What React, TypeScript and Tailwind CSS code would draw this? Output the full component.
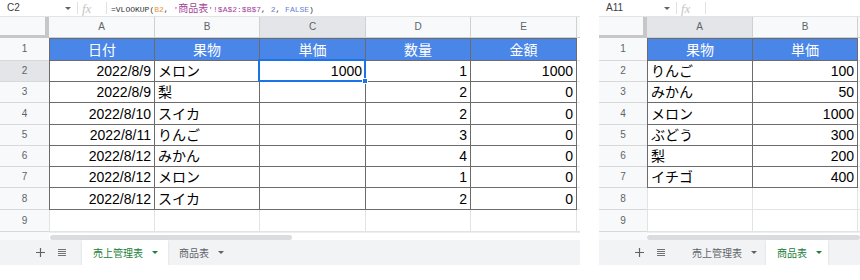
import React from "react";

const SANS = "font-['Liberation_Sans','Noto_Sans_CJK_JP',sans-serif]";

const ROW_H = [
  "h-[23px]",
  "h-[21px]",
  "h-[21px]",
  "h-[22px]",
  "h-[21px]",
  "h-[21px]",
  "h-[21px]",
  "h-[22px]",
  "h-[22px]",
];

type Col = { letter: string; w: string; align: "l" | "r"; hl?: boolean };
type Tab = { label: string; w: string; active?: boolean };

function Caret({ className }: { className?: string }) {
  return (
    <svg width="6" height="3" viewBox="0 0 6 3" className={className}>
      <path d="M0 0h6L3 3z" fill="currentColor" />
    </svg>
  );
}

function PlusIcon() {
  return (
    <svg width="9" height="9" viewBox="0 0 9 9">
      <path d="M4.5 0v9M0 4.5h9" stroke="#5f6368" strokeWidth="1.2" />
    </svg>
  );
}

function ListIcon() {
  return (
    <svg width="8" height="8" viewBox="0 0 8 8">
      <path d="M0 0.5h8M0 2.5h8M0 4.5h8M0 6.5h8" stroke="#6f7378" strokeWidth="1" />
    </svg>
  );
}

type SheetProps = {
  w: string;
  rhw: string;
  nameBox: string;
  formula?: React.ReactNode;
  cols: Col[];
  rows: string[][];
  tableRows: number;
  hlRow?: number;
  sel?: { r: number; c: number };
  thumb: string;
  tabs: Tab[];
};

function Sheet(p: SheetProps) {
  return (
    <div className={`${p.w} h-full flex flex-col shrink-0`}>
      {/* formula bar */}
      <div className="h-[17px] flex items-center border-b border-[#e2e3e3] shrink-0 bg-white">
        <div className="w-[62px] pl-[7px] text-[10px] leading-none text-[#3c4043]">{p.nameBox}</div>
        <div className="w-[15px] pl-[3px] flex items-center text-[#5f6368]">
          <Caret />
        </div>
        <div className="w-px h-[12px] bg-[#e0e0e0]" />
        <div className="w-[28px] pl-[4px] font-['Liberation_Serif',serif] italic text-[13px] leading-none text-[#c4c4c4]">
          fx
        </div>
        <div className="w-px h-[12px] bg-[#e0e0e0]" />
        <div className="pl-[4px] whitespace-pre font-['Liberation_Mono','Noto_Sans_CJK_JP',monospace] text-[8px] leading-none text-[#333]">
          {p.formula}
        </div>
      </div>

      {/* column header row */}
      <div className="h-[21px] flex shrink-0">
        <div className={`${p.rhw} bg-[#f8f9fa] border-r-4 border-b-[3px] border-[#c7c7c7]`} />
        {p.cols.map((c) => (
          <div
            key={c.letter}
            className={`${c.w} ${c.hl ? "bg-[#e3e5e8]" : "bg-[#f8f9fa]"} border-r border-b border-[#d0d0d0] flex items-center justify-center text-[10px] leading-none text-[#5f6368]`}
          >
            {c.letter}
          </div>
        ))}
        <div className="flex-1 bg-[#f8f9fa] border-b border-[#d0d0d0]" />
      </div>

      {/* rows */}
      {ROW_H.map((h, i) => {
        const inTable = i < p.tableRows;
        const isHead = i === 0;
        const bc = inTable ? "border-[#6b6b6b]" : "border-[#e2e3e3]";
        return (
          <div key={i} className={`${h} flex shrink-0`}>
            <div
              className={`${p.rhw} ${p.hlRow === i + 1 ? "bg-[#e3e5e8]" : "bg-[#f8f9fa]"} border-b border-[#d8d8d8] flex items-center justify-center text-[10px] leading-none text-[#5f6368]`}
            >
              {i + 1}
            </div>
            {p.cols.map((c, j) => {
              const v = p.rows[i]?.[j] ?? "";
              const isSel = p.sel && p.sel.r === i && p.sel.c === j;
              return (
                <div
                  key={j}
                  className={`${c.w} relative flex items-center px-[3px] text-[14px] leading-none border-r border-b ${j === 0 ? "border-l" : ""} ${isHead && inTable ? "border-t" : ""} ${bc} ${
                    isHead && inTable
                      ? "bg-[#4a86e8] text-white justify-center"
                      : c.align === "r"
                        ? "justify-end text-black"
                        : "justify-start text-black"
                  }`}
                >
                  {v}
                  {isSel && (
                    <div className="absolute left-[-2px] top-[-2px] right-[-1px] bottom-[-1px] border-2 border-[#1a73e8] z-10">
                      <div className="absolute right-[-4px] bottom-[-4px] w-[6px] h-[6px] bg-[#1a73e8] border border-white" />
                    </div>
                  )}
                </div>
              );
            })}
            <div className="flex-1 border-b border-[#e2e3e3]" />
          </div>
        );
      })}

      {/* horizontal scroll */}
      <div className="h-[8px] flex shrink-0">
        <div className={`${p.rhw} bg-[#f8f9fa]`} />
        <div className="flex-1 bg-white border-t border-[#eeeeee]">
          <div className={`${p.thumb} h-[5px] mt-[2px] rounded-full bg-[#dadce0]`} />
        </div>
      </div>

      {/* tab bar */}
      <div className="h-[25px] bg-[#f1f3f4] flex shrink-0">
        <div className="w-[82px] flex items-center pl-[36px] gap-[13px]">
          <PlusIcon />
          <ListIcon />
        </div>
        {p.tabs.map((t) => (
          <div
            key={t.label}
            className={`${t.w} h-full flex items-center pl-[11px] gap-[9px] text-[10px] leading-none font-['Noto_Sans_CJK_JP',sans-serif] ${
              t.active ? "bg-white text-[#188038] shadow-[0_1px_2px_rgba(0,0,0,0.12)]" : "text-[#5f6368]"
            }`}
          >
            <span>{t.label}</span>
            <Caret />
          </div>
        ))}
      </div>
      <div className="flex-1 bg-white" />
    </div>
  );
}

const CJK10 = "text-[10px] font-['Noto_Sans_CJK_JP',sans-serif]";

export default function App() {
  const leftFormula = (
    <>
      <span className="text-[#333]">=VLOOKUP(</span>
      <span className="text-[#e8953e]">B2</span>
      <span className="text-[#333]">{", "}</span>
      <span className="text-[#a4449c]">
        {"'"}
        <span className={CJK10}>商品表</span>
        {"'!$A$2:$B$7"}
      </span>
      <span className="text-[#333]">{", "}</span>
      <span className="text-[#6b80cf]">2</span>
      <span className="text-[#333]">{", "}</span>
      <span className="text-[#6b80cf]">FALSE</span>
      <span className="text-[#333]">)</span>
    </>
  );

  const leftRows = [
    ["日付", "果物", "単価", "数量", "金額"],
    ["2022/8/9", "メロン", "1000", "1", "1000"],
    ["2022/8/9", "梨", "", "2", "0"],
    ["2022/8/10", "スイカ", "", "2", "0"],
    ["2022/8/11", "りんご", "", "3", "0"],
    ["2022/8/12", "みかん", "", "4", "0"],
    ["2022/8/12", "メロン", "", "1", "0"],
    ["2022/8/12", "スイカ", "", "2", "0"],
  ];

  const rightRows = [
    ["果物", "単価"],
    ["りんご", "100"],
    ["みかん", "50"],
    ["メロン", "1000"],
    ["ぶどう", "300"],
    ["梨", "200"],
    ["イチゴ", "400"],
  ];

  return (
    <div className={`w-[860px] h-[280px] bg-white flex gap-[19px] overflow-hidden ${SANS}`}>
      <Sheet
        w="w-[580px]"
        rhw="w-[49px]"
        nameBox="C2"
        formula={leftFormula}
        cols={[
          { letter: "A", w: "w-[106px]", align: "r" },
          { letter: "B", w: "w-[105px]", align: "l" },
          { letter: "C", w: "w-[106px]", align: "r", hl: true },
          { letter: "D", w: "w-[105px]", align: "r" },
          { letter: "E", w: "w-[106px]", align: "r" },
        ]}
        rows={leftRows}
        tableRows={8}
        hlRow={2}
        sel={{ r: 1, c: 2 }}
        thumb="ml-[1px] w-[242px]"
        tabs={[
          { label: "売上管理表", w: "w-[86px]", active: true },
          { label: "商品表", w: "w-[64px]" },
        ]}
      />
      <Sheet
        w="w-[261px]"
        rhw="w-[48px]"
        nameBox="A11"
        formula={null}
        cols={[
          { letter: "A", w: "w-[106px]", align: "l", hl: true },
          { letter: "B", w: "w-[105px]", align: "r" },
        ]}
        rows={rightRows}
        tableRows={7}
        thumb="w-full"
        tabs={[
          { label: "売上管理表", w: "w-[85px]" },
          { label: "商品表", w: "w-[62px]", active: true },
        ]}
      />
    </div>
  );
}
